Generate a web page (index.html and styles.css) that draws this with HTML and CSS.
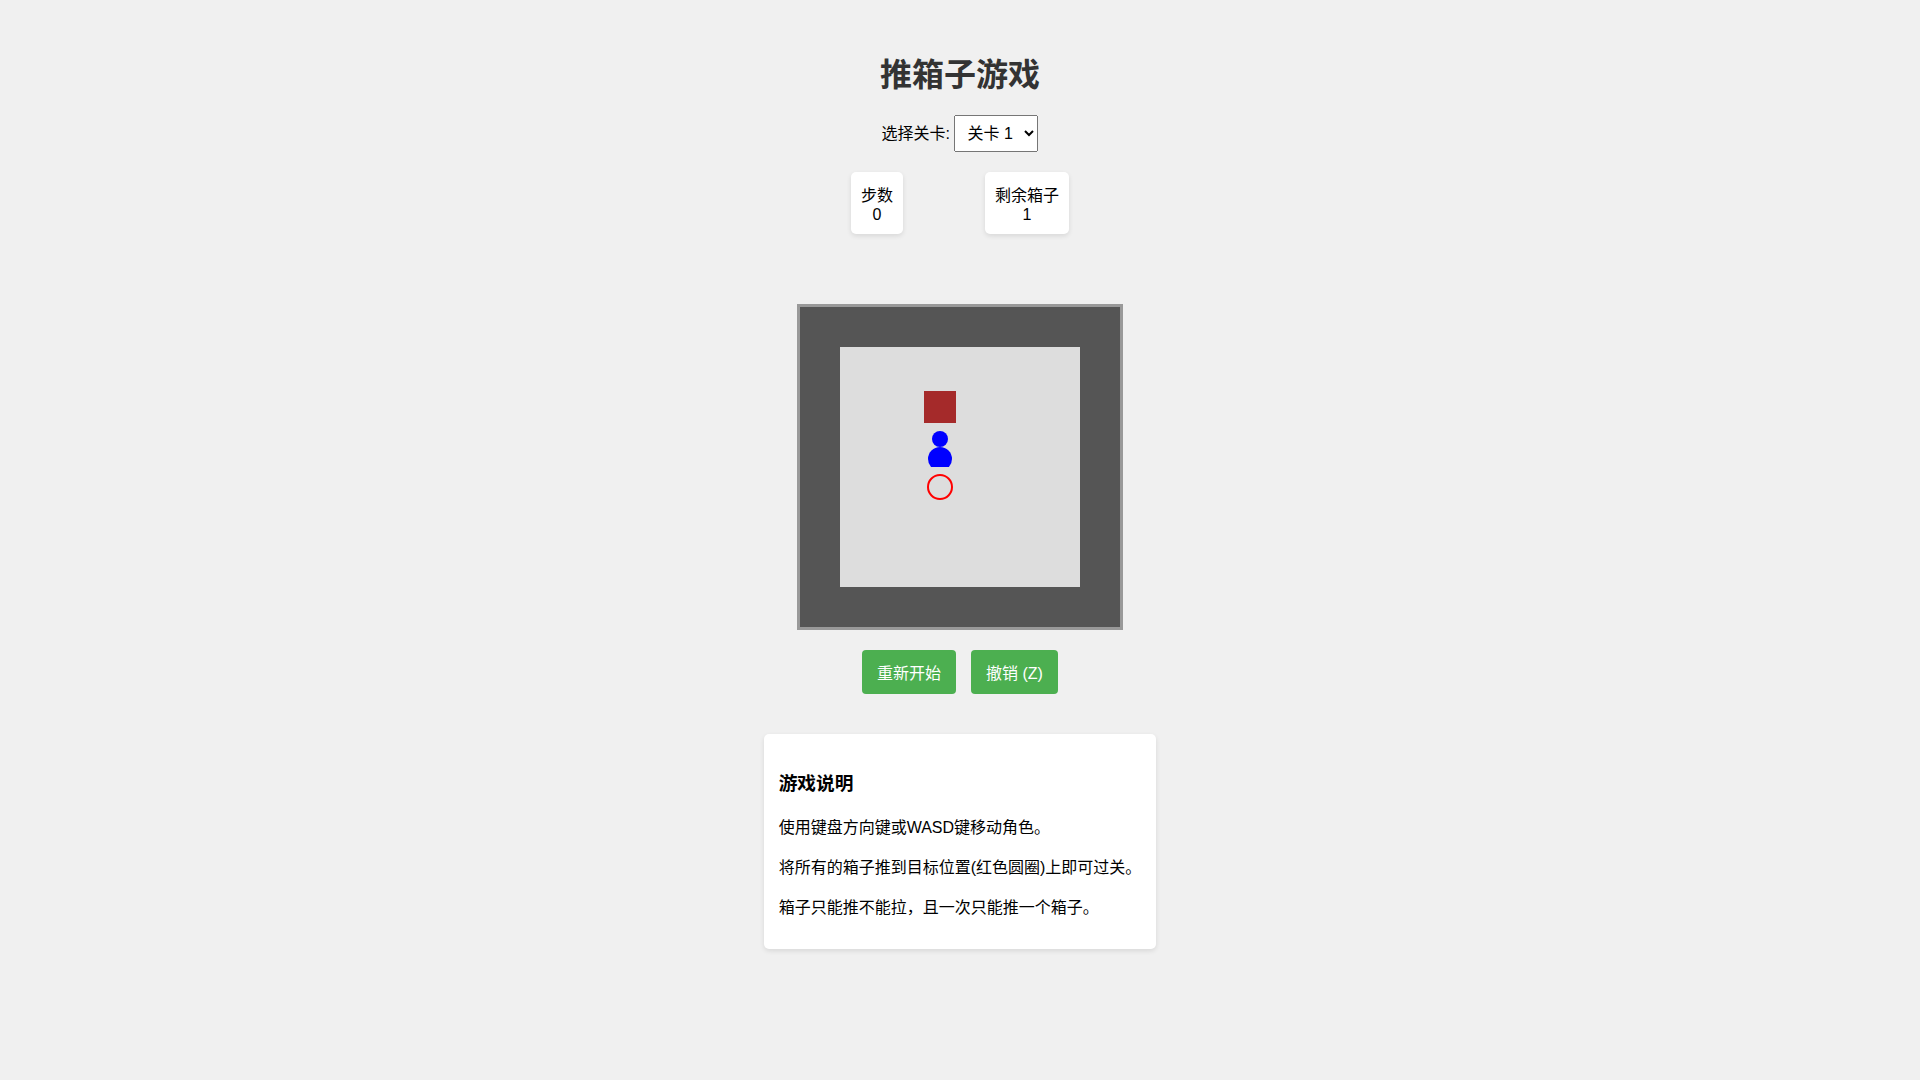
FILE: index.html
```html
<!DOCTYPE html>
<html lang="zh-CN">
<head>
  <meta charset="UTF-8">
  <meta name="viewport" content="width=device-width, initial-scale=1.0">
  <title>推箱子游戏</title>
  <link rel="stylesheet" href="styles.css">
</head>
<body>
  <h1>推箱子游戏</h1>

  <div class="level-selector">
    <label for="level-select">选择关卡:</label>
    <select id="level-select">
      <option value="0">关卡 1</option>
    </select>
  </div>

  <div class="stats">
    <div class="stat">
      <div>步数</div>
      <div id="steps">0</div>
    </div>
    <div class="stat">
      <div>剩余箱子</div>
      <div id="boxes-left">1</div>
    </div>
  </div>

  <div id="message" class="message"></div>

  <div id="board" class="board"></div>

  <div class="controls">
    <button type="button" id="restart">重新开始</button>
    <button type="button" id="undo">撤销 (Z)</button>
  </div>

  <div class="instructions">
    <h3>游戏说明</h3>
    <p>使用键盘方向键或WASD键移动角色。</p>
    <p>将所有的箱子推到目标位置(红色圆圈)上即可过关。</p>
    <p>箱子只能推不能拉，且一次只能推一个箱子。</p>
  </div>

  <script src="script.js"></script>
</body>
</html>
```

FILE: styles.css
```css
body {
  font-family: Arial, "Liberation Sans", "Noto Sans CJK SC", sans-serif;
  display: flex;
  flex-direction: column;
  align-items: center;
  margin: 0;
  padding: 29px;
  background-color: #f0f0f0;
}
h1 {
  margin: 20px 0;
  font-size: 32px;
  color: #333;
}
.level-selector {
  margin-bottom: 20px;
}
.level-selector select {
  padding: 8px;
  font-family: inherit;
  font-size: 16px;
}
.stats {
  display: flex;
  justify-content: space-around;
  width: 100%;
  max-width: 300px;
  margin-bottom: 20px;
}
.stat {
  padding: 10px;
  text-align: center;
  background-color: white;
  border-radius: 5px;
  box-shadow: 0 2px 5px rgba(0, 0, 0, 0.1);
}
.message {
  min-height: 30px;
  margin-bottom: 20px;
  font-weight: bold;
  color: #4caf50;
}
.board {
  display: grid;
  border: 3px solid #999;
}
.cell {
  width: 40px;
  height: 40px;
  background-color: #ddd;
}
.cell svg {
  display: block;
}
.wall {
  background-color: #555;
}
.box {
  fill: brown;
}
.player {
  fill: blue;
}
.target {
  fill: none;
  stroke: red;
  stroke-width: 2;
}
.controls {
  display: flex;
  gap: 15px;
  margin: 20px 0 40px;
}
.controls button {
  padding: 10px 15px;
  font-family: inherit;
  font-size: 16px;
  color: white;
  background-color: #4caf50;
  border: none;
  border-radius: 4px;
  cursor: pointer;
}
.controls button:hover {
  background-color: #45a049;
}
.instructions {
  padding: 15px;
  background-color: white;
  border-radius: 5px;
  box-shadow: 0 2px 5px rgba(0, 0, 0, 0.1);
}
.instructions h3 {
  margin: 19px 0;
}
```

FILE: script.js
```js
// # 墙  $ 箱子  @ 玩家  . 目标  * 目标上的箱子  + 目标上的玩家
const levels = [
  [
    '########',
    '#      #',
    '#  $   #',
    '#  @   #',
    '#  .   #',
    '#      #',
    '#      #',
    '########'
  ]
];

const board = document.getElementById('board');
const levelSelect = document.getElementById('level-select');
const message = document.getElementById('message');

const TARGET = '<circle class="target" cx="20" cy="20" r="12"/>';
const BOX = '<rect class="box" x="4" y="4" width="32" height="32"/>';
const PLAYER = '<g class="player"><circle cx="20" cy="12" r="8"/><circle cx="20" cy="32" r="12"/></g>';

let grid, steps, history;

function loadLevel() {
  grid = levels[levelSelect.value].map(row => row.split(''));
  steps = 0;
  history = [];
  render();
}

function render() {
  board.style.gridTemplateColumns = `repeat(${grid[0].length}, 40px)`;
  board.innerHTML = grid.flat().map(c => {
    if (c === '#') return '<div class="cell wall"></div>';
    let shapes = '';
    if ('.*+'.includes(c)) shapes += TARGET;
    if ('$*'.includes(c)) shapes += BOX;
    if ('@+'.includes(c)) shapes += PLAYER;
    return `<div class="cell"><svg width="40" height="40">${shapes}</svg></div>`;
  }).join('');

  const left = grid.flat().filter(c => c === '$').length;
  document.getElementById('steps').textContent = steps;
  document.getElementById('boxes-left').textContent = left;
  message.textContent = left === 0 ? '恭喜过关！' : '';
}

function enter(x, y, onFloor, onTarget) {
  grid[y][x] = '.*+'.includes(grid[y][x]) ? onTarget : onFloor;
}

function move(dx, dy) {
  const y = grid.findIndex(row => row.includes('@') || row.includes('+'));
  const x = grid[y].findIndex(c => c === '@' || c === '+');
  const next = grid[y + dy][x + dx];
  if (next === '#') return;

  const before = grid.map(row => [...row]);
  if ('$*'.includes(next)) {
    // 箱子后面必须是空位
    if (!' .'.includes(grid[y + dy * 2][x + dx * 2])) return;
    enter(x + dx * 2, y + dy * 2, '$', '*');
  }
  enter(x + dx, y + dy, '@', '+');
  enter(x, y, ' ', '.');
  history.push(before);
  steps++;
  render();
}

function undo() {
  if (history.length === 0) return;
  grid = history.pop();
  steps--;
  render();
}

document.addEventListener('keydown', (e) => {
  const key = e.key.toLowerCase();
  const dirs = {
    arrowup: [0, -1], w: [0, -1],
    arrowdown: [0, 1], s: [0, 1],
    arrowleft: [-1, 0], a: [-1, 0],
    arrowright: [1, 0], d: [1, 0]
  };
  if (key === 'z') {
    undo();
  } else if (dirs[key]) {
    e.preventDefault();
    move(...dirs[key]);
  }
});

levelSelect.addEventListener('change', loadLevel);
document.getElementById('restart').addEventListener('click', loadLevel);
document.getElementById('undo').addEventListener('click', undo);

loadLevel();
```
